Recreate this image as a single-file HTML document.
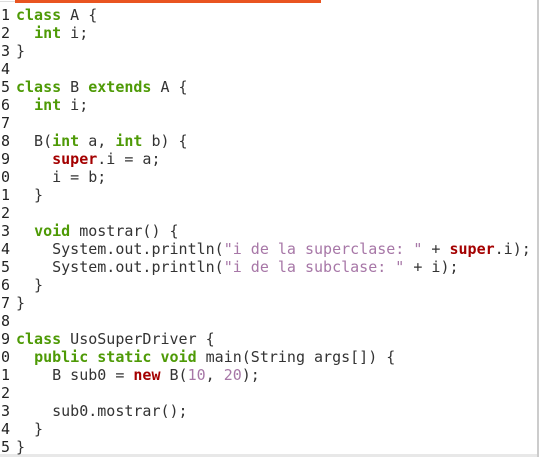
<!DOCTYPE html>
<html><head><meta charset="utf-8"><style>
html,body{margin:0;padding:0;background:#fff;width:539px;height:457px;overflow:hidden}
.bar{position:absolute;left:15px;top:0;width:306px;height:3px;background:#e95420}
.tl{position:absolute;left:0;top:1px;width:15px;height:1px;background:#ddd}
.bot{position:absolute;left:0;top:454px;width:539px;height:3px;background:#e8e8e8}
.rt{position:absolute;left:537px;top:0;width:2px;height:457px;background:#ccc}
pre{position:absolute;left:1px;top:6px;margin:0;font:15px/18px "DejaVu Sans Mono","Liberation Mono",monospace;color:#333;letter-spacing:0}
.n{color:#222;display:inline-block;width:15px}
.k{color:#4e9a06;font-weight:bold}
.s{color:#a777a7}
.r{color:#a40000;font-weight:bold}
</style></head><body>
<div class="tl"></div><div class="bar"></div><div class="bot"></div><div class="rt"></div>
<pre><span class="n">1</span><span class="k">class</span> A {
<span class="n">2</span>  <span class="k">int</span> i;
<span class="n">3</span>}
<span class="n">4</span>
<span class="n">5</span><span class="k">class</span> B <span class="k">extends</span> A {
<span class="n">6</span>  <span class="k">int</span> i;
<span class="n">7</span>
<span class="n">8</span>  B(<span class="k">int</span> a, <span class="k">int</span> b) {
<span class="n">9</span>    <span class="r">super</span>.i = a;
<span class="n">0</span>    i = b;
<span class="n">1</span>  }
<span class="n">2</span>
<span class="n">3</span>  <span class="k">void</span> mostrar() {
<span class="n">4</span>    System.out.println(<span class="s">"i de la superclase: "</span> + <span class="r">super</span>.i);
<span class="n">5</span>    System.out.println(<span class="s">"i de la subclase: "</span> + i);
<span class="n">6</span>  }
<span class="n">7</span>}
<span class="n">8</span>
<span class="n">9</span><span class="k">class</span> UsoSuperDriver {
<span class="n">0</span>  <span class="k">public static void</span> main(String args[]) {
<span class="n">1</span>    B sub0 = <span class="r">new</span> B(<span class="s">10</span>, <span class="s">20</span>);
<span class="n">2</span>
<span class="n">3</span>    sub0.mostrar();
<span class="n">4</span>  }
<span class="n">5</span>}</pre>
</body></html>
